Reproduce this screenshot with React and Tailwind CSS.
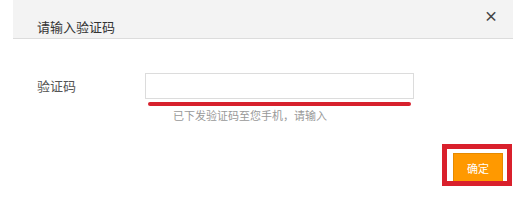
import React from 'react';

const App = () => {
  return (
    <div className="w-[519px] h-[204px] bg-white overflow-hidden" style={{ fontFamily: '"Microsoft YaHei", "Noto Sans CJK SC", "Liberation Sans", sans-serif' }}>
      <div className="ml-[13px] w-[500px]">
        {/* header */}
        <div className="relative h-[39px] bg-[#f3f3f3] border-b border-[#dcdcdc]">
          <div className="pt-[19px] pl-[24px] text-[13px] leading-[16px] text-[#333]">请输入验证码</div>
          <span className="absolute right-[15px] top-[7px] text-[14px] font-bold leading-[16px] text-[#444]">×</span>
        </div>

        {/* body */}
        <div className="mt-[34px] flex items-center pl-[24px]">
          <label className="w-[108px] text-[13px] leading-[16px] text-[#555]">验证码</label>
          <input className="w-[269px] h-[26px] border border-[#dcdcdc] bg-white outline-none" />
        </div>
        <div className="ml-[135px] mt-[3px] h-[4px] w-[263px] rounded-full bg-[#d7212d]" />
        <div className="ml-[160px] mt-[2px] text-[11px] leading-[14px] text-[#999]">已下发验证码至您手机，请输入</div>

        {/* footer */}
        <div className="mt-[31px] flex justify-end pr-[10px]">
          <div className="relative">
            <button className="w-[50px] h-[30px] bg-[#ff9900] border border-[#e58a00] text-white text-[11px] leading-[14px] pb-[1px]">确定</button>
            <div className="absolute left-[-11px] top-[-9px] right-[-9px] bottom-[-3px] border-[5px] border-[#d9202c] pointer-events-none" />
          </div>
        </div>
      </div>
    </div>
  );
};

export default App;
